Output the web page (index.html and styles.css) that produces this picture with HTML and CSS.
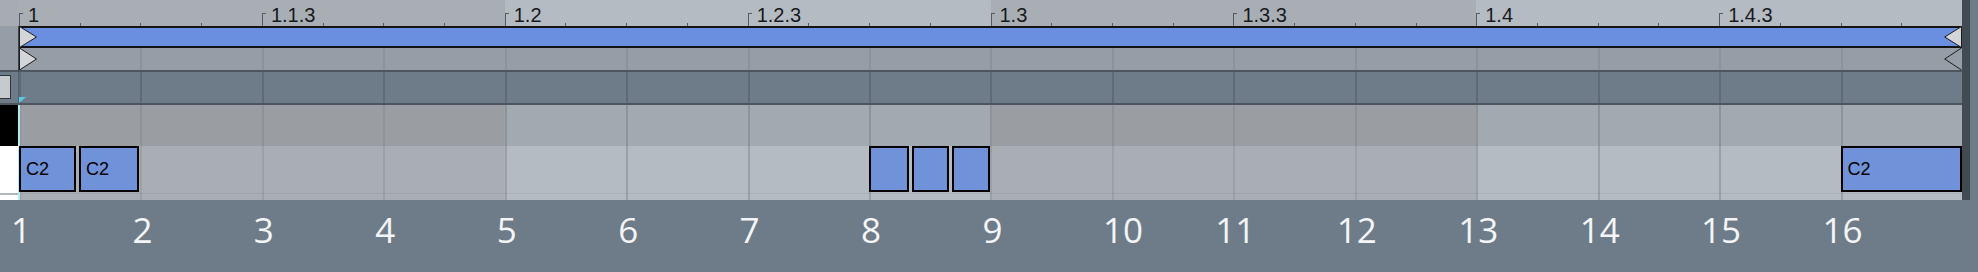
FILE: index.html
```html
<!DOCTYPE html>
<html lang="en">
<head>
    <meta charset="UTF-8">
    <meta name="viewport" content="width=device-width, initial-scale=1.0">
    <title>Clip - Step Editor</title>
    <link rel="stylesheet" href="styles.css">
</head>
<body>
    <div class="editor">
        <div class="timeline">
            <div class="side">
                <div class="side-ruler"></div>
                <div class="side-loop"></div>
                <div class="side-mid"><span class="fold-box"></span></div>
                <div class="side-key black"></div>
                <div class="side-key white"></div>
            </div>

            <div class="lanes">
                <div class="ruler">
                    <div class="seg"><div class="q"><span class="tick major"></span><span class="lbl">1</span></div><div class="q"><span class="tick"></span></div><div class="q"><span class="tick"></span></div><div class="q"><span class="tick"></span></div></div>
                    <div class="seg"><div class="q"><span class="tick major"></span><span class="lbl">1.1.3</span></div><div class="q"><span class="tick"></span></div><div class="q"><span class="tick"></span></div><div class="q"><span class="tick"></span></div></div>
                    <div class="seg"><div class="q"><span class="tick major"></span><span class="lbl">1.2</span></div><div class="q"><span class="tick"></span></div><div class="q"><span class="tick"></span></div><div class="q"><span class="tick"></span></div></div>
                    <div class="seg"><div class="q"><span class="tick major"></span><span class="lbl">1.2.3</span></div><div class="q"><span class="tick"></span></div><div class="q"><span class="tick"></span></div><div class="q"><span class="tick"></span></div></div>
                    <div class="seg"><div class="q"><span class="tick major"></span><span class="lbl">1.3</span></div><div class="q"><span class="tick"></span></div><div class="q"><span class="tick"></span></div><div class="q"><span class="tick"></span></div></div>
                    <div class="seg"><div class="q"><span class="tick major"></span><span class="lbl">1.3.3</span></div><div class="q"><span class="tick"></span></div><div class="q"><span class="tick"></span></div><div class="q"><span class="tick"></span></div></div>
                    <div class="seg"><div class="q"><span class="tick major"></span><span class="lbl">1.4</span></div><div class="q"><span class="tick"></span></div><div class="q"><span class="tick"></span></div><div class="q"><span class="tick"></span></div></div>
                    <div class="seg"><div class="q"><span class="tick major"></span><span class="lbl">1.4.3</span></div><div class="q"><span class="tick"></span></div><div class="q"><span class="tick"></span></div><div class="q"><span class="tick"></span></div></div>
                </div>

                <div class="loop-bar">
                    <svg class="marker start" width="19" height="22" viewBox="0 0 19 22"><path d="M0.5 0.5 L17.5 11 L0.5 21.5 Z" fill="#d3d5d8" stroke="#1c1c1c"/></svg>
                    <svg class="marker end" width="18" height="22" viewBox="0 0 18 22"><path d="M17.5 0.5 L0.7 11 L17.5 21.5 Z" fill="#d3d5d8" stroke="#1c1c1c"/></svg>
                </div>
                <div class="loop-row">
                    <svg class="marker start" width="19" height="22" viewBox="0 0 19 22"><path d="M0.5 0 L17.5 11 L0.5 22 Z" fill="#d3d5d8" stroke="#1c1c1c"/></svg>
                    <svg class="marker end" width="18" height="22" viewBox="0 0 18 22"><path d="M17.5 0 L0.7 11 L17.5 22" fill="none" stroke="#1c1c1c"/></svg>
                </div>

                <div class="auto-lane"><span class="start-flag"></span></div>
                <div class="key-lane shade"></div>
                <div class="key-lane notes">
                    <div class="cell first">
                        <div class="note n-a">C2</div>
                        <div class="note n-b">C2</div>
                    </div>
                    <div class="cell eighth">
                        <div class="note n-t1"></div>
                        <div class="note"></div>
                        <div class="note"></div>
                    </div>
                    <div class="cell last">
                        <div class="note">C2</div>
                    </div>
                </div>
            </div>

            <div class="scroll"></div>
        </div>

        <div class="steps">
            <div class="step"><span>1</span></div>
            <div class="step"><span>2</span></div>
            <div class="step"><span>3</span></div>
            <div class="step"><span>4</span></div>
            <div class="step"><span>5</span></div>
            <div class="step"><span>6</span></div>
            <div class="step"><span>7</span></div>
            <div class="step"><span>8</span></div>
            <div class="step"><span>9</span></div>
            <div class="step nudge"><span>10</span></div>
            <div class="step"><span>11</span></div>
            <div class="step"><span>12</span></div>
            <div class="step"><span>13</span></div>
            <div class="step"><span>14</span></div>
            <div class="step"><span>15</span></div>
            <div class="step"><span>16</span></div>
        </div>
    </div>
</body>
</html>
```

FILE: styles.css
```css
body { margin: 0; background-color: #6e7c89; width: 1978px; height: 272px; overflow: hidden; font-family: "Liberation Sans", Arial, sans-serif; }

.timeline { display: flex; height: 200px; }

/* left strip (keys / fold) */
.side { width: 19px; flex: none; display: flex; flex-direction: column; }
.side > div { box-sizing: border-box; }
.side-ruler { height: 26px; background-color: #a7acb2; }
.side-loop { height: 46px; background-color: #959ea7; border-bottom: 2px solid #4d5660; border-right: 1px solid #3c4248; }
.side-mid { height: 33px; background-color: #6e7c89; border-bottom: 2px solid #4d5660; border-right: 1px solid #56616c; padding-top: 3px; }
.fold-box { display: block; width: 12px; height: 24px; margin-left: -1px; box-sizing: border-box; border: 1px solid #2f3438; background-color: #c7cacd; }
.side-key { border-right: 1px solid #b5ecf4; }
.side-key.black { height: 41px; background-color: #000; }
.side-key.white { height: 54px; background: linear-gradient(to bottom, #fff 0 47px, #b3b8bd 47px 49px, #fff 49px); }

/* lanes */
.lanes { width: 1943px; flex: none; display: flex; flex-direction: column; }

.ruler { height: 26px; display: flex; }
.seg { flex: 1; display: flex; background-color: #b5bbc2; }
.seg:nth-child(4n+1), .seg:nth-child(4n+2) { background-color: #a9aeb4; }
.q { flex: 1; display: flex; align-items: flex-end; }
.tick { display: block; width: 0; height: 3px; border-left: 1px solid #555b62; }
.tick.major { width: 3px; height: 12px; border-top: 1px solid #555b62; }
.lbl { align-self: flex-start; margin-top: 5px; margin-left: 5px; font-size: 20px; line-height: 20px; color: #17191c; white-space: nowrap; }

.loop-bar { position: relative; height: 22px; box-sizing: border-box; border-top: 2px solid #141414; border-bottom: 2px solid #141414; background-color: #6a8fe1; }
.loop-row { position: relative; height: 24px; box-sizing: border-box; border-bottom: 2px solid #4d5660; background-color: #959ea7;
    background-image: repeating-linear-gradient(to right, #8a939c 0 2px, transparent 2px 121.4375px); }
.marker { position: absolute; display: block; }
.loop-bar .marker { top: -2px; }
.loop-row .marker { top: 0; }
.marker.start { left: 0; }
.marker.end { right: 0; }

.auto-lane { position: relative; height: 33px; box-sizing: border-box; border-bottom: 2px solid #4d5660; background-color: #6e7c89;
    background-image: repeating-linear-gradient(to right, #5f6a76 0 2px, transparent 2px 121.4375px); }
.start-flag { position: absolute; left: 0; bottom: 0; width: 0; height: 0; border-top: 6px solid #5bc9e8; border-right: 7px solid transparent; }

.key-lane { box-shadow: inset 1px 0 0 #b5ecf4; }
.key-lane.shade { height: 41px;
    background-image: repeating-linear-gradient(to right, #8e9399 0 2px, transparent 2px 121.4375px),
        linear-gradient(to right, #9a9ea2 0 50%, #a3a9b0 50% 100%);
    background-size: auto, 971.5px 100%; }
.key-lane.notes { height: 54px; display: grid; grid-template-columns: repeat(16, 1fr); grid-template-rows: 46px;
    background-image: linear-gradient(to bottom, transparent 0 47px, rgba(0,0,0,0.06) 47px 48px, transparent 48px),
        repeating-linear-gradient(to right, #9aa0a6 0 2px, transparent 2px 121.4375px),
        linear-gradient(to right, #a9aeb4 0 50%, #b5bbc2 50% 100%);
    background-size: auto, auto, 971.5px 100%; }

.cell { display: flex; gap: 3px; min-width: 0; }
.cell.first { grid-column: 1; }
.cell.eighth { grid-column: 8; padding-right: 1px; }
.cell.last { grid-column: 16; }
.note { flex: 1; box-sizing: border-box; border: 2px solid #000; background-color: #7092d8; color: #000; font-size: 18px; display: flex; align-items: center; padding-left: 5px; }
.n-a { flex: none; width: 57px; }
.n-b { flex: none; width: 60px; }
.n-t1 { flex: none; width: 40px; }

.scroll { width: 8px; flex: none; background-color: #424a52; }

/* step numbers */
.steps { display: flex; height: 72px; padding-left: 19px; }
.step { width: 121.4375px; flex: none; }
.step span { display: block; width: 100px; margin-left: -48px; padding-top: 12px; text-align: center; font-family: "Open Sans", "Noto Sans", sans-serif; font-size: 35px; line-height: 35px; color: #f3f5f7; }
.step.nudge span { margin-left: -39px; }
```
